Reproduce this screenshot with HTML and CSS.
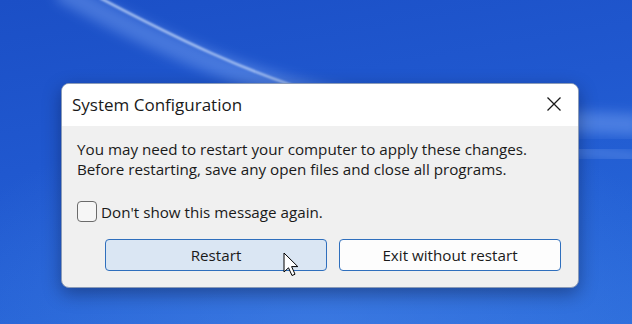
FILE: index.html
```html
<!DOCTYPE html>
<html>
<head>
<meta charset="utf-8">
<link rel="stylesheet" href="styles.css">
</head>
<body>
<svg class="wallpaper" width="632" height="324" viewBox="0 0 632 324">
  <defs>
    <filter id="blur4"><feGaussianBlur stdDeviation="6"/></filter>
    <filter id="blur1"><feGaussianBlur stdDeviation="0.8"/></filter>
  </defs>
  <path d="M60 -10 C 150 40, 240 80, 340 100 S 560 120, 640 125" stroke="rgba(150,190,255,0.35)" stroke-width="22" fill="none" filter="url(#blur4)"/>
  <path d="M100 -2 C 170 35, 250 75, 330 97" stroke="rgba(220,235,255,0.8)" stroke-width="2" fill="none" filter="url(#blur1)"/>
  <path d="M560 150 C 590 152, 615 154, 640 158" stroke="rgba(170,200,255,0.35)" stroke-width="8" fill="none" filter="url(#blur4)"/>
</svg>
<div class="dialog">
  <div class="titlebar">
    <span class="title">System Configuration</span>
    <span class="close">
      <svg width="16" height="16" viewBox="0 0 16 16"><path d="M1.5 1.5 L14.5 14.5 M14.5 1.5 L1.5 14.5" stroke="#1a1a1a" stroke-width="1.3" fill="none"/></svg>
    </span>
  </div>
  <div class="content">
    <p class="message">You may need to restart your computer to apply these changes.<br>Before restarting, save any open files and close all programs.</p>
    <label class="check"><span class="box"></span><span>Don't show this message again.</span></label>
    <div class="buttons">
      <button class="btn primary">Restart</button>
      <button class="btn">Exit without restart</button>
    </div>
  </div>
  <svg class="cursor" width="20" height="28" viewBox="0 0 20 28">
    <path d="M1 1 L1 20 L5.5 15.8 L9 23.5 L12 22.2 L8.6 14.6 L14.8 14.6 Z" fill="#ffffff" stroke="#000" stroke-width="1" stroke-linejoin="round"/>
  </svg>
</div>
</body>
</html>
```
FILE: styles.css
```css
html, body {
  margin: 0;
  padding: 0;
}
body {
  width: 632px;
  height: 324px;
  overflow: hidden;
  position: relative;
  background:
    radial-gradient(ellipse 420px 220px at 320px 330px, rgba(80,140,235,0.45), rgba(80,140,235,0) 100%),
    linear-gradient(170deg, #1b4fc6 0%, #2058cf 40%, #2563d6 75%, #2b6cdb 100%);
  font-family: "Open Sans", "Noto Sans", sans-serif;
  color: #1a1a1a;
  padding-top: 83px;
  padding-left: 61px;
  box-sizing: border-box;
}
.wallpaper {
  position: absolute;
  left: 0;
  top: 0;
}
.dialog {
  position: relative;
  width: 518px;
  height: 205px;
  box-sizing: border-box;
  border-radius: 8px;
  background: #f0f0f0;
  border: 1px solid #8a9bb8;
  box-shadow: 0 6px 18px rgba(0,0,20,0.35);
}
.titlebar {
  height: 42px;
  background: #ffffff;
  border-radius: 7px 7px 0 0;
  display: flex;
  align-items: center;
  justify-content: space-between;
  padding: 0 16px 0 10px;
}
.title {
  font-size: 17px;
  margin-top: -1px;
}
.close {
  display: flex;
  width: 16px;
  height: 16px;
  margin-top: -2px;
}
.content {
  padding: 13px 16px 0 15px;
}
.message {
  margin: 0;
  font-size: 15.2px;
  line-height: 20px;
}
.check {
  display: flex;
  align-items: center;
  gap: 4px;
  margin-top: 22px;
  font-size: 15.2px;
}
.box {
  width: 18px;
  height: 19px;
  border: 1px solid #6b6b6b;
  border-radius: 4px;
  background: #f6f6f6;
}
.buttons {
  display: flex;
  justify-content: flex-end;
  gap: 12px;
  margin-top: 17px;
  padding-right: 1px;
}
.btn {
  width: 222px;
  height: 32px;
  box-sizing: border-box;
  border: 1px solid #2f6fbd;
  border-radius: 4px;
  background: #fdfdfd;
  font-family: "Open Sans", "Noto Sans", sans-serif;
  font-size: 15.2px;
  color: #1a1a1a;
  padding: 0;
}
.btn.primary {
  background: #dae6f3;
}
.cursor {
  position: absolute;
  left: 221px;
  top: 168px;
}
```
